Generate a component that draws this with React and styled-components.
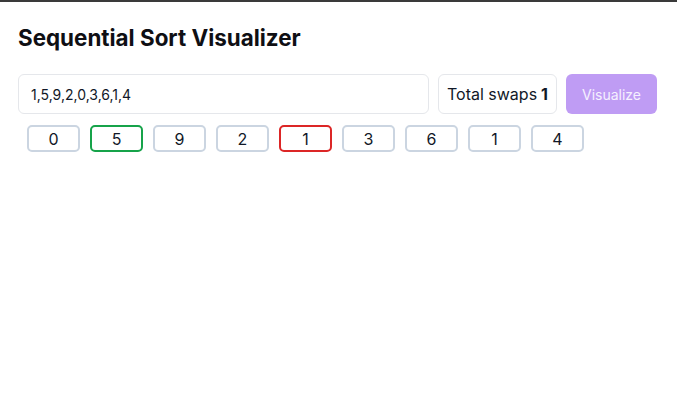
import styled, { createGlobalStyle } from "styled-components";

const GlobalStyle = createGlobalStyle`
    * { box-sizing: border-box; }
    body {
        margin: 0;
        font-family: Inter, "Noto Sans", sans-serif;
        color: #111827;
        background: #fff;
    }
`;

const Page = styled.div`
    border-top: 2px solid #3a3a3a;
    padding: 22px 20px 0 18px;
`;

const Title = styled.h1`
    margin: 0 0 22px;
    font-size: 22.4px;
    font-weight: 700;
    line-height: 28px;
    color: #0f0f14;
`;

const Controls = styled.div`
    display: flex;
    gap: 9px;
    height: 40px;
`;

const Input = styled.input`
    flex: 1;
    border: 1px solid #e5e7eb;
    border-radius: 6px;
    padding: 0 12px;
    font-family: inherit;
    font-size: 14px;
    color: #111827;
    outline: none;
`;

const Swaps = styled.div`
    display: flex;
    align-items: center;
    padding: 0 8px;
    border: 1px solid #e5e7eb;
    border-radius: 6px;
    font-size: 16px;

    b { margin-left: 4px; font-weight: 700; }
`;

const Button = styled.button`
    width: 91px;
    border: none;
    border-radius: 6px;
    background: #bf9cf4;
    color: #f5f0ff;
    font-family: inherit;
    font-size: 14px;
`;

const Cells = styled.div`
    display: flex;
    gap: 10px;
    padding: 11px 9px 0;
`;

const Cell = styled.div`
    width: 53px;
    height: 27px;
    display: flex;
    align-items: center;
    justify-content: center;
    border: 2px solid ${(p) => p.$color || "#cbd5e1"};
    border-radius: 5px;
    font-size: 16px;
    color: #111827;
`;

const values = [0, 5, 9, 2, 1, 3, 6, 1, 4];
const colors = { 1: "#16a34a", 4: "#dc2626" };

export default function App() {
    return (
        <>
            <GlobalStyle />
            <Page>
                <Title>Sequential Sort Visualizer</Title>
                <Controls>
                    <Input defaultValue="1,5,9,2,0,3,6,1,4" />
                    <Swaps>
                        Total swaps <b>1</b>
                    </Swaps>
                    <Button disabled>Visualize</Button>
                </Controls>
                <Cells>
                    {values.map((v, i) => (
                        <Cell key={i} $color={colors[i]}>
                            {v}
                        </Cell>
                    ))}
                </Cells>
            </Page>
        </>
    );
}
